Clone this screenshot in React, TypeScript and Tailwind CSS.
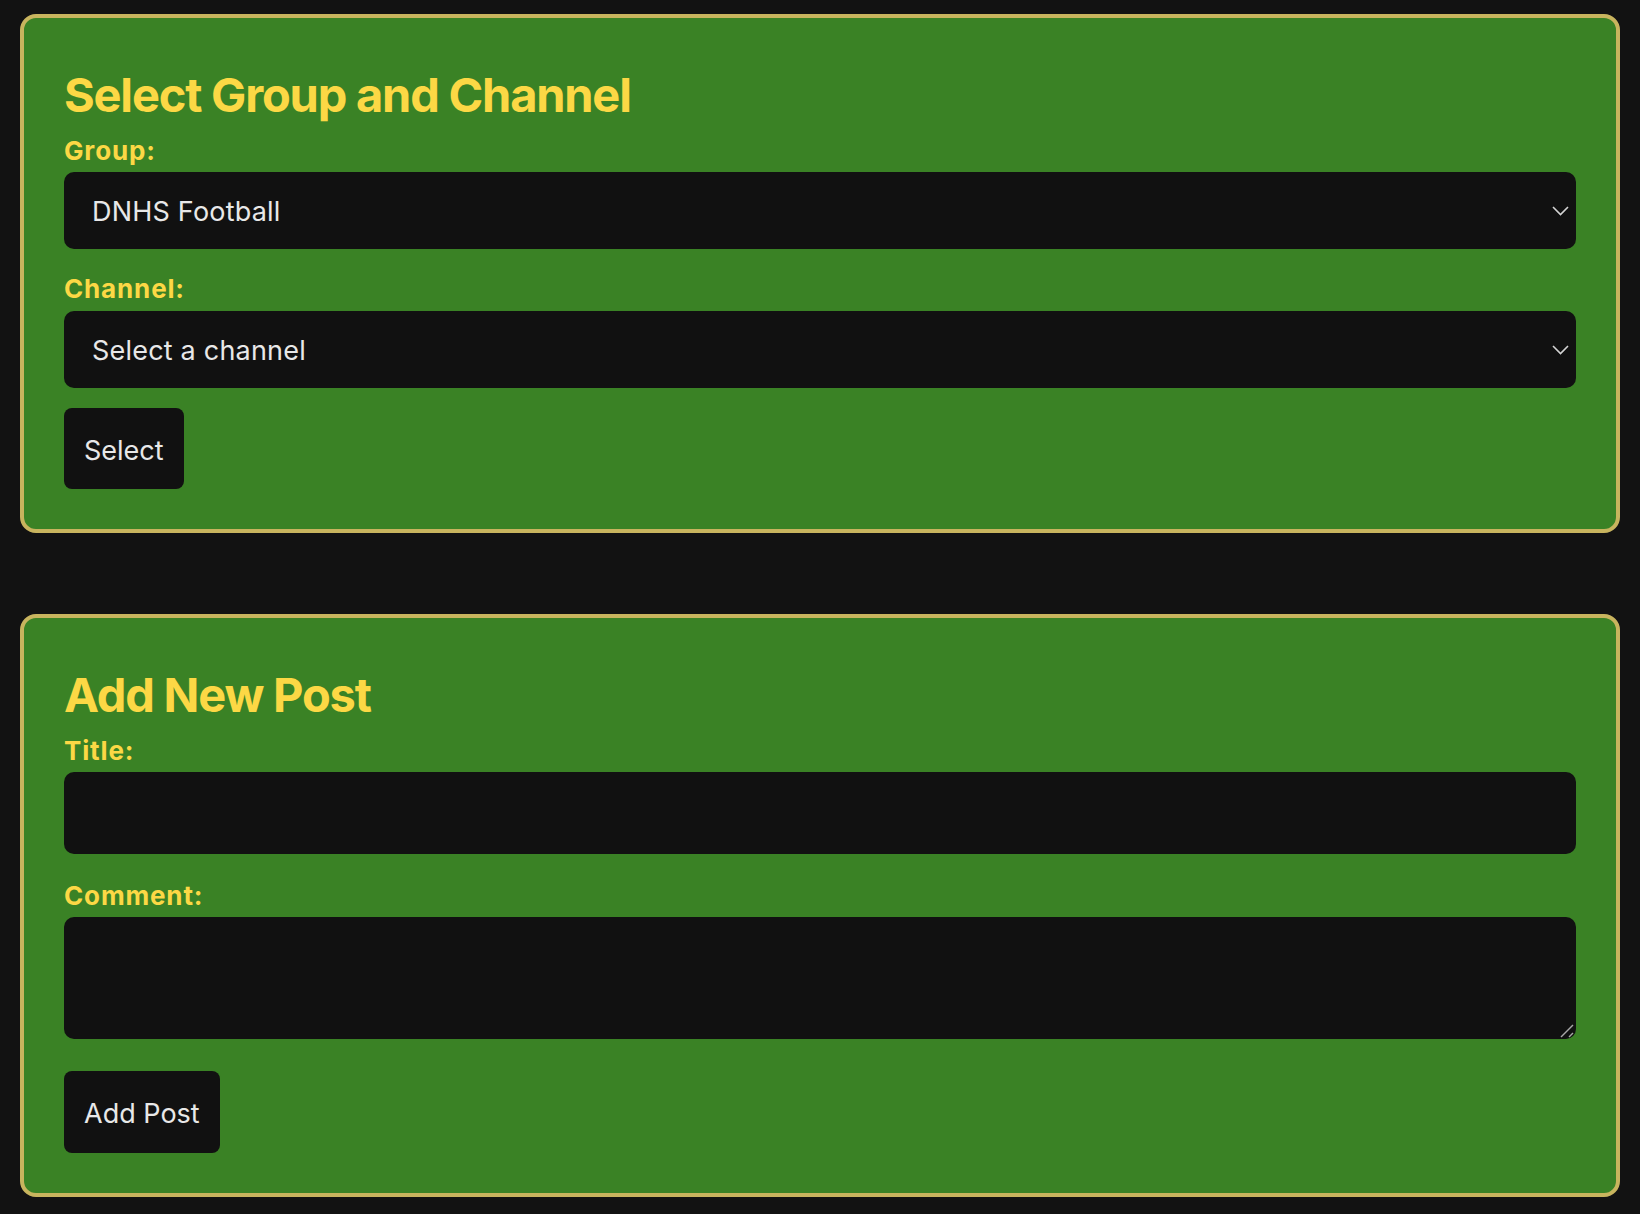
import React from "react";

const Chevron = () => (
  <svg
    className="pointer-events-none absolute right-[7px] top-1/2 -translate-y-1/2"
    width="17"
    height="11"
    viewBox="0 0 17 11"
    fill="none"
  >
    <path d="M1 1.5 L8.5 9 L16 1.5" stroke="#d4d4d4" strokeWidth="1.6" />
  </svg>
);

const labelCls =
  "block text-[26px] leading-[30px] font-bold tracking-[0.85px] text-[#fcd845]";
const headingCls =
  "text-[47px] leading-[58px] font-bold text-[#fcd845] tracking-[-1.2px]";

export default function App() {
  return (
    <div
      className="min-h-[1214px] bg-[#121212] px-[20px] pt-[14px] pb-[17px]"
      style={{ fontFamily: "Inter, 'Noto Sans', sans-serif" }}
    >
      <section className="rounded-[16px] border-[4px] border-[#c8b45e] bg-[#3a8225] px-[40px] pt-[48px] pb-[40px]">
        <h2 className={headingCls}>Select Group and Channel</h2>
        <label className={`${labelCls} mt-[12px]`}>Group:</label>
        <div className="relative mt-[6px]">
          <select className="block h-[77px] w-full appearance-none rounded-[10px] bg-[#111111] pl-[28px] pt-[4px] text-[27px] tracking-[0.2px] text-[#e8e8e8] outline-none">
            <option>DNHS Football</option>
          </select>
          <Chevron />
        </div>
        <label className={`${labelCls} mt-[25px]`}>Channel:</label>
        <div className="relative mt-[7px]">
          <select className="block h-[77px] w-full appearance-none rounded-[10px] bg-[#111111] pl-[28px] pt-[4px] text-[27px] tracking-[0.2px] text-[#e8e8e8] outline-none">
            <option>Select a channel</option>
          </select>
          <Chevron />
        </div>
        <button className="mt-[20px] h-[81px] rounded-[8px] bg-[#111111] px-[20px] pt-[5px] text-[27px] text-[#e8e8e8]">
          Select
        </button>
      </section>

      <section className="mt-[81px] rounded-[16px] border-[4px] border-[#c8b45e] bg-[#3a8225] px-[40px] pt-[48px] pb-[40px]">
        <h2 className={headingCls}>Add New Post</h2>
        <label className={`${labelCls} mt-[12px]`}>Title:</label>
        <input
          type="text"
          className="mt-[6px] block h-[82px] w-full rounded-[10px] bg-[#111111] px-[26px] text-[27px] text-[#e8e8e8] outline-none"
        />
        <label className={`${labelCls} mt-[27px]`}>Comment:</label>
        <div className="relative mt-[6px]">
          <textarea className="block h-[122px] w-full resize-none rounded-[10px] bg-[#111111] px-[26px] py-[16px] text-[27px] text-[#e8e8e8] outline-none" />
          <svg
            className="pointer-events-none absolute bottom-[1px] right-[2px]"
            width="14"
            height="14"
            viewBox="0 0 14 14"
            fill="none"
          >
            <path d="M1 13 L13 1" stroke="#a8a8a8" strokeWidth="1.4" />
            <path d="M9 13 L13 9" stroke="#a8a8a8" strokeWidth="1.4" />
          </svg>
        </div>
        <button className="mt-[32px] h-[82px] rounded-[8px] bg-[#111111] px-[20px] pt-[5px] text-[27px] text-[#e8e8e8]">
          Add Post
        </button>
      </section>
    </div>
  );
}
